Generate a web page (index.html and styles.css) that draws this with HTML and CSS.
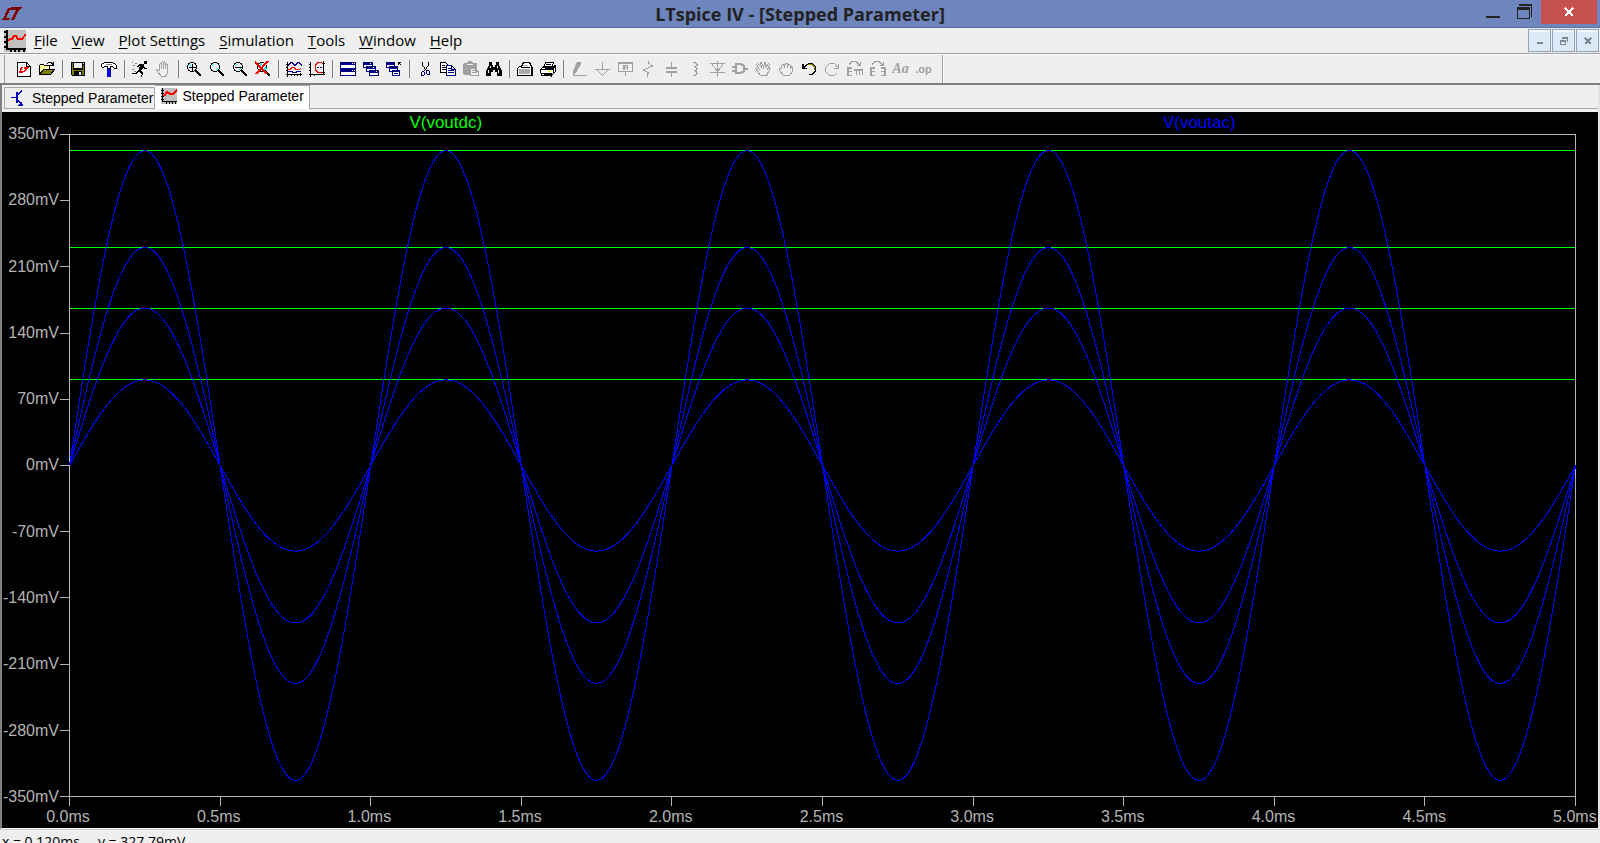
FILE: index.html
```html
<!DOCTYPE html>
<html lang="en">
<head>
    <meta charset="UTF-8">
    <meta name="viewport" content="width=device-width, initial-scale=1.0">
    <title>LTspice IV - [Stepped Parameter]</title>
    <link rel="stylesheet" href="styles.css">
</head>
<body>
<div class="app">
    <header class="titlebar">
        <svg class="app-logo" width="20" height="14" viewBox="0 0 20 14"><path fill="#800000" d="M6 1h3L4 11h4l-1 2H0v-1h1zM9 0h11l-1 2-2 1-5 10H9l5-10H8z"/></svg>
        <h1>LTspice IV - [Stepped Parameter]</h1>
        <div class="window-buttons">
            <button class="win-btn" aria-label="Minimize"><svg width="16" height="16"><path fill="#222" d="M1 12h14v2H1z"/></svg></button>
            <button class="win-btn" aria-label="Restore"><svg width="16" height="16"><path fill="#222" fill-rule="evenodd" d="M2 0h13v13h-1V2H2zM0 3h13v12H0zM1 6v8h11V6z"/></svg></button>
            <button class="win-btn close" aria-label="Close"><svg width="12" height="10"><path stroke="#fff" stroke-width="2" d="M2 1l8 8M10 1L2 9"/></svg></button>
        </div>
    </header>

    <nav class="menubar">
        <svg class="doc-icon" width="22" height="22" viewBox="0 0 22 22"><path fill="#c0c0c0" d="M0 0h22v22H0z"/><path stroke="#000" fill="none" stroke-width="2" d="M3 0v19M2 19h20M0 2h3M0 7h3M0 12h3M0 17h3M7 19v3M11 19v3M15 19v3M20 19v3"/><path stroke="#f00" stroke-width="2" fill="none" d="M4 11l2-2h2l2-3h2l2 3h4l4-5"/></svg>
        <a href="#"><u>F</u>ile</a>
        <a href="#"><u>V</u>iew</a>
        <a href="#"><u>P</u>lot Settings</a>
        <a href="#"><u>S</u>imulation</a>
        <a href="#"><u>T</u>ools</a>
        <a href="#"><u>W</u>indow</a>
        <a href="#"><u>H</u>elp</a>
        <div class="mdi-buttons">
            <button aria-label="Minimize plot"><svg width="8" height="8"><path fill="#7a8794" d="M1 5h6v2H1z"/></svg></button>
            <button aria-label="Restore plot"><svg width="8" height="8"><path fill="#7a8794" fill-rule="evenodd" d="M2 0h6v5H7V2H2zM0 3h6v5H0zM1 5v2h4V5z"/></svg></button>
            <button aria-label="Close plot"><svg width="8" height="8"><path stroke="#7a8794" stroke-width="2" d="M1 1l6 6M7 1L1 7"/></svg></button>
        </div>
    </nav>

    <div class="toolbar">
        <div class="tools">
        <button aria-label="New schematic"><svg viewBox="0 0 16 16"><path fill="#fff" stroke="#000" d="M1.500 1.500h9l4 4v10h-13zM10.500 1.500v4h4"/><path fill="#f00" d="M5 6h2L5 10h3l-1 2H3v-1zM8 6h5l-1 2h-1l-2 3H7l2-3H8z"/></svg></button>
        <button aria-label="Open"><svg viewBox="0 0 16 16"><path fill="#ff9" stroke="#000" d="M.5 13.500v-9l1-1h3l1 1h5v4"/><path fill="#808000" stroke="#000" d="M.5 13.500l4-5h11l-4 5z"/><path fill="none" stroke="#000" d="M8 2.500l2-1h2l2 2M14.500 1v3.500H11"/></svg></button>
        <i class="sep"></i>
        <button aria-label="Save"><svg viewBox="0 0 16 16"><path d="M1 1h14v14H2l-1-1z"/><path fill="#808000" d="M2 2h1v7h10V4h1v10h-2v-4H4v4H2z"/><path fill="#efefef" d="M4 2h8v5H4zM9 11h2v3H9zM13 2h1v1h-1z"/></svg></button>
        <i class="sep"></i>
        <button aria-label="Control panel"><svg viewBox="0 0 16 16"><path fill="#fff" stroke="#000" d="M.5 5.500v-2l3-2h7l3 1 2 2v3h-2l-2-2h-2v2h-3v-2h-3l-1 1h-1z"/><path fill="#808080" d="M5 3h6v1H5z"/><path stroke="#000" d="M6.500 6v3M9.500 6v3"/><path fill="#00f" d="M6 8h4v8H6z"/><path fill="#000080" d="M9 8h1v8H9z"/></svg></button>
        <i class="sep"></i>
        <button aria-label="Run"><svg viewBox="0 0 16 16"><path d="M12 0h3v3h-3zM8 3h3l1 1v2l2 1 1-1v2h-3l-1-1-2 3 2 2-1 4H9l1-3-3-2-3 2H0v-1h3l3-2 2-5-3 1V5z"/><path fill="#808080" d="M0 1h1v1H0zM3 2h2v1H3zM1 4h2v1H1zM0 8h2v1H0zM2 10h2v1H2z"/></svg></button>
        <button aria-label="Halt"><svg viewBox="0 0 16 16"><path class="gray-line" d="M4.500 10V3.500l1-1 1 1V8M6.500 8V1.500l1-1 1 1V8M8.500 2l1-1 1 1.500V8M10.500 4l1-1 1 1v8l-2 3.500h-4L5 13.500 1.500 9.500v-1h1l2 2"/></svg></button>
        <i class="sep"></i>
        <button aria-label="Zoom in"><svg viewBox="0 0 16 16"><circle cx="6" cy="6" r="4.500" fill="#efefef" stroke="#000"/><path stroke="#0ff" fill="none" d="M3.500 5L5 3.500"/><path stroke="#000" d="M3 6.500h7M6.500 3v7"/><path stroke="#000" stroke-width="2" d="M10 10l5 5"/></svg></button>
        <button aria-label="Pan"><svg viewBox="0 0 16 16"><circle cx="6" cy="6" r="4.500" fill="#efefef" stroke="#000"/><path stroke="#0ff" fill="none" d="M3 5l2-2M7 9l2-2"/><path stroke="#000" stroke-width="2" d="M10 10l5 5"/></svg></button>
        <button aria-label="Zoom out"><svg viewBox="0 0 16 16"><circle cx="6" cy="6" r="4.500" fill="#efefef" stroke="#000"/><path stroke="#0ff" fill="none" d="M3 5l2-2M7 9l2-2"/><path stroke="#000" d="M3 6.500h7"/><path stroke="#000" stroke-width="2" d="M10 10l5 5"/></svg></button>
        <button aria-label="Zoom full extents"><svg viewBox="0 0 16 16"><circle cx="7" cy="6" r="4.500" fill="#efefef" stroke="#000"/><path stroke="#0ff" stroke-width="2" d="M5 4l2-1M9 9l2-2"/><path stroke="#000" stroke-width="2" d="M10 10l5 5"/><path stroke="#f00" stroke-width="2" d="M0 1l12 12M13 0L1 13"/></svg></button>
        <i class="sep"></i>
        <button aria-label="Autorange"><svg viewBox="0 0 16 16"><path stroke="#000" d="M1.500 1v15M0 13.500h16M0 3.500h2M0 6.500h2M0 9.500h2M5.500 13v2M8.500 13v2M11.500 13v2M14.500 12v3"/><path fill="none" stroke="#000080" d="M2 4.500l3-3h1l3 3 3-3h1l3 3M2 10.500h4l1 1h3l1-1h4"/><path fill="none" stroke="#f00" d="M2 8.500h2l2-2h2l2 2h3l2-1"/></svg></button>
        <button aria-label="Plot settings"><svg viewBox="0 0 16 16"><path stroke="#000" d="M1.500 1v15M0 13.500h16M0 3.500h2M0 6.500h2M0 9.500h2M5.500 13v2M14.500 0v13M13 2.500h3M13 11.500h3"/><path fill="none" stroke="#f00" d="M13 1.500H9l-3 3v4l3 3h4"/><path fill="#000080" d="M8 6h2v1H8zM11 6h2v1h-2z"/></svg></button>
        <i class="sep"></i>
        <button aria-label="Tile windows"><svg viewBox="0 0 16 16"><path fill="#fff" stroke="#000080" d="M.5 1.500h15v6H.5zM.5 8.500h15v6H.5z"/><path fill="#000080" d="M0 1h16v3H0zM0 8h16v3H0z"/><path fill="#fff" d="M12 2h1v1h-1zM14 2h1v1h-1zM12 9h1v1h-1zM14 9h1v1h-1z"/></svg></button>
        <button aria-label="Cascade windows"><svg viewBox="0 0 16 16"><path fill="#fff" stroke="#000080" d="M.5 1.500h9v5h-9zM3.500 5.500h9v5h-9zM6.500 9.500h9v5h-9z"/><path fill="#000080" d="M0 1h10v3H0zM3 5h10v3H3zM6 9h10v3H6z"/><path fill="#fff" d="M7 2h1v1H7zM10 6h1v1h-1zM13 10h1v1h-1z"/></svg></button>
        <button aria-label="Close all windows"><svg viewBox="0 0 16 16"><path fill="#fff" stroke="#000080" d="M.5 1.500h8v5h-8zM3.500 5.500h8v5h-8zM6.500 9.500h7v5h-7z"/><path fill="#000080" d="M0 1h9v3H0zM3 5h9v3H3zM6 9h8v2H6zM8 12h4v1H8z"/><path stroke="#000" fill="none" d="M12.500 4V1.500H15M12.500 1.500l3 3"/></svg></button>
        <i class="sep"></i>
        <button aria-label="Cut"><svg viewBox="0 0 16 16"><path stroke="#000" fill="none" d="M5.500 1v3l4 6M11.500 1v3l-4 6"/><path stroke="#000080" fill="none" d="M4.500 10.500h2l1 1v2l-1 1h-2v-4M9.500 9.500h2l1 1v3h-2l-1-1z"/></svg></button>
        <button aria-label="Copy"><svg viewBox="0 0 16 16"><path fill="#fff" stroke="#000" d="M.5 1.500h5l3 3v7h-8z"/><path stroke="#000" d="M2 4.500h3M2 6.500h5M2 8.500h5"/><path fill="#fff" stroke="#000080" d="M6.500 4.500h5l4 4v6h-9zM11.500 4.500v4h4"/><path stroke="#000080" d="M8 7.500h3M8 9.500h6M8 11.500h6"/></svg></button>
        <button aria-label="Paste"><svg viewBox="0 0 16 16"><path fill="#a0a0a0" d="M0 3l1-1h3l1-2h4l1 2h3l1 1v11H1l-1-1z"/><path fill="#efefef" stroke="#a0a0a0" d="M7.500 7.500h5l3 3v4h-8zM12.500 7.500v3h3"/><path stroke="#a0a0a0" d="M9 9.500h3M9 11.500h5"/><path fill="#efefef" d="M4 3h6v1H4z"/></svg></button>
        <button aria-label="Find"><svg viewBox="0 0 16 16"><path d="M3 1h3v3h1v2h2V4h1V1h3v3l3 6v5h-5v-4H9V9H7v2H5v4H0v-5l3-6z"/><path fill="#fff" d="M4 5h1v2H4zM2 9h1v3H2zM11 5h1v2h-1zM12 9h1v3h-1z"/></svg></button>
        <i class="sep"></i>
        <button aria-label="Print"><svg viewBox="0 0 16 16"><path fill="#fff" stroke="#000" d="M.5 14.500v-7l2-2h2l2-4h6l2 4 1 2v7z"/><path fill="#aaa" d="M2 8h11v5H2zM6 4h5v1H6z"/><path d="M14 7h1v8H2v-1h12zM4 6h9v1H4z"/></svg></button>
        <button aria-label="Print setup"><svg viewBox="0 0 16 16"><path fill="#fff" stroke="#000" d="M3.500 6.500l2-5h8l-2 5zM.5 8.500l3-3h10l2-1v6l-4 4h-10z"/><path stroke="#000" d="M6 3.500h5M5 5.500h5M0 8.500h12l3-3M1 12.500h10v3M13 6v7"/><path fill="#ff0" d="M8 10h3v1H8z"/></svg></button>
        <i class="sep"></i>
        <button aria-label="Wire" disabled><svg viewBox="0 0 16 16"><path class="gray-fill" d="M6 1h4v2L5 12H4l-2 2v-4zM2 14h14v1H2z"/></svg></button>
        <button aria-label="Ground" disabled><svg viewBox="0 0 16 16"><path class="gray-line" d="M8.500 1v7M1 8.500h15M2.500 8.500l6 6 6-6"/></svg></button>
        <button aria-label="Label net" disabled><svg viewBox="0 0 16 16"><path class="gray-line" d="M1.500 1.500h14v9h-14zM1 2.500h15M8.500 11v4"/><path class="gray-line" d="M6.500 9V4.500h4V9M7.500 9V4M6 6.500h5"/></svg></button>
        <button aria-label="Resistor" disabled><svg viewBox="0 0 16 16"><path class="gray-line" d="M8.500 0v2l4 3-9 4 5 3-1 1v3"/></svg></button>
        <button aria-label="Capacitor" disabled><svg viewBox="0 0 16 16"><path class="gray-fill" d="M8 1h1v5h5v2H3V6h5zM3 10h11v2H9v4H8v-4H3z"/></svg></button>
        <button aria-label="Inductor" disabled><svg viewBox="0 0 16 16"><path class="gray-line" d="M7 1.500h2l2 2v1l-2 1H8l2 1 1 1-1 2H8l2 1 1 2-2 2H7"/></svg></button>
        <button aria-label="Diode" disabled><svg viewBox="0 0 16 16"><path class="gray-line" d="M8.500 0v16M1 2.500h15M3 3.500l5.500 7 5.500-7M1 11.500h15"/></svg></button>
        <button aria-label="Component" disabled><svg viewBox="0 0 16 16"><path class="gray-line" stroke-width="2" d="M4 3h5l3 2v5l-3 2H4zM0 5.500h4M0 9.500h4M12 7.500h4"/></svg></button>
        <button aria-label="Move" disabled><svg viewBox="0 0 16 16"><path class="gray-line" d="M5.500 14.500l-5-7 1-1 3 2-3-5 1-1 4 4-1-5h1l2 5 1-5h1v5l3-4 1 1-2 5 2-2 1 1-3 5-1 2z"/></svg></button>
        <button aria-label="Drag" disabled><svg viewBox="0 0 16 16"><path class="gray-line" d="M5.500 14.500l-4-5v-2h2v-3l1-1 2 1 1-2h2v2l2-1 1 1v1l2 1v4l-3 4zM6.500 4v3M9.500 4v3M12.500 5v3"/></svg></button>
        <button aria-label="Undo"><svg viewBox="0 0 16 16"><path fill="none" stroke="#000" d="M1.500 3v5M2 7.500h4M2.500 3v4M3 6.500l3-3 2-1h3l3 3v5l-3 3H8"/><path stroke="#808000" fill="none" d="M7 3.500h4l2 2v3"/></svg></button>
        <button aria-label="Redo" disabled><svg viewBox="0 0 16 16"><path class="gray-line" d="M14.500 3v4.500H10M13.500 6l-3-3.500h-5l-4 4v4l4 4h5l2-2"/></svg></button>
        <button aria-label="Rotate" disabled><svg viewBox="0 0 16 16"><path class="gray-line" d="M2 3.500l3-3h4l4 4M13.500 1v3.500H10"/><path class="gray-fill" d="M0 6h5v2H2v2h3v1H2v3h3v1H0zM7 8h9v6h-1v-4h-2v4h-1v-4h-2v4H9v-4H7z"/></svg></button>
        <button aria-label="Mirror" disabled><svg viewBox="0 0 16 16"><path class="gray-line" d="M2 3.500l3-3h4l4 4M13.500 1v3.500H10"/><path class="gray-fill" d="M0 6h5v2H2v2h3v1H2v3h3v1H0zM11 6h5v9h-5v-1h3v-3h-3v-1h3V8h-3z"/></svg></button>
        <button aria-label="Text" class="text-tool" disabled>Aa</button>
        <button aria-label="SPICE directive" class="op-tool" disabled>.op</button>
        </div>
    </div>

    <main class="workspace">
        <div class="tabs">
            <button class="tab"><svg width="16" height="18" viewBox="0 0 16 18"><path fill="none" stroke="#0000c0" d="M0 8.500h5M5.500 3v11M6.500 3v11M6 6.500l5-5M6 10.500l6 6"/><path fill="#0000c0" d="M11 12v5H7v-1l2-1z"/></svg>Stepped Parameter</button>
            <button class="tab active"><svg width="16" height="16" viewBox="0 0 16 16"><path fill="#c0c0c0" d="M0 0h16v16H0z"/><path stroke="#000" fill="none" d="M1.500 0v14M1 13.500h15M0 2.500h3M0 5.500h3M0 8.500h3M0 11.500h3M5.500 14v2M8.500 14v2M11.500 14v2M14.500 14v2"/><path stroke="#f00" stroke-width="2" fill="none" d="M3 8l3-4 3 2h3l4-4"/></svg>Stepped Parameter</button>
        </div>

        <section class="plot">
            <div class="legend">
                <span class="dc">V(voutdc)</span>
                <span class="ac">V(voutac)</span>
            </div>
            <div class="y-axis">
                <span>350mV</span><span>280mV</span><span>210mV</span><span>140mV</span><span>70mV</span><span>0mV</span><span>-70mV</span><span>-140mV</span><span>-210mV</span><span>-280mV</span><span>-350mV</span>
            </div>
            <div class="chart"><svg id="traces"></svg></div>
            <div class="x-axis">
                <span>0.0ms</span><span>0.5ms</span><span>1.0ms</span><span>1.5ms</span><span>2.0ms</span><span>2.5ms</span><span>3.0ms</span><span>3.5ms</span><span>4.0ms</span><span>4.5ms</span><span>5.0ms</span>
            </div>
        </section>
    </main>

    <footer class="statusbar"><span>x = 0.120ms</span><span>y = 327.79mV</span></footer>
</div>
<script src="plot.js"></script>
</body>
</html>
```
FILE: styles.css
```css
* {
    box-sizing: border-box;
}
body {
    margin: 0;
    background: #efefef;
    font-family: "Open Sans", "Noto Sans", sans-serif;
    color: #000;
}
button {
    border: 0;
    padding: 0;
    background: none;
    font: inherit;
    color: inherit;
}
svg {
    display: block;
    shape-rendering: crispEdges;
}
.app {
    display: flex;
    flex-direction: column;
    height: 100vh;
    overflow: hidden;
}

/* title bar */
.titlebar {
    display: grid;
    grid-template-columns: 1fr auto 1fr;
    flex: none;
    height: 28px;
    background: #6e85be;
    border-bottom: 1px solid #5a6ca0;
}
.app-logo {
    margin: 7px 0 0 2px;
}
.titlebar h1 {
    margin: 0;
    font-size: 18px;
    font-weight: 700;
    line-height: 28px;
    color: #222;
}
.window-buttons {
    display: flex;
    justify-content: flex-end;
    padding-right: 3px;
}
.win-btn {
    display: flex;
    align-items: center;
    justify-content: center;
    width: 32px;
    height: 24px;
}
.win-btn.close {
    width: 56px;
    background: #c75050;
}

/* menu */
.menubar {
    display: flex;
    align-items: center;
    flex: none;
    gap: 14px;
    height: 26px;
    padding-left: 4px;
    border-bottom: 1px solid #a0a0a0;
    font-size: 15px;
    line-height: 24px;
}
.menubar a {
    padding-bottom: 2px;
    color: #000;
    text-decoration: none;
}
.doc-icon {
    margin-right: -6px;
}
.menubar u {
    text-underline-offset: 2px;
}
.mdi-buttons {
    display: flex;
    gap: 1px;
    margin-left: auto;
    padding-right: 1px;
}
.mdi-buttons button {
    display: flex;
    align-items: center;
    justify-content: center;
    width: 23px;
    height: 23px;
    border: 1px solid #94a3b3;
    background: #dceaf8;
    box-shadow: inset 0 2px #f0f8ff;
}

/* toolbar */
.toolbar {
    flex: none;
    height: 31px;
    padding-left: 4px;
    border-top: 1px solid #fff;
    border-bottom: 2px solid #808080;
}
.tools {
    display: inline-flex;
    align-items: center;
    height: 28px;
    padding: 0 7px;
    border-left: 1px solid #a0a0a0;
    border-right: 1px solid #a0a0a0;
    box-shadow: 1px 0 #fff;
}
.tools button {
    display: flex;
    align-items: center;
    justify-content: center;
    width: 23px;
    height: 24px;
}
.tools svg {
    width: 16px;
    height: 16px;
}
.sep {
    width: 8px;
    height: 18px;
    background: linear-gradient(#808080, #808080) center / 1px 100% no-repeat;
}
.gray-line {
    fill: none;
    stroke: #a0a0a0;
}
.gray-fill {
    fill: #a0a0a0;
}
.tools .text-tool {
    font: italic bold 14px "Liberation Serif", serif;
    color: #a0a0a0;
}
.tools .op-tool {
    font: bold 11px "Liberation Sans", sans-serif;
    color: #a0a0a0;
}

/* tabs */
.workspace {
    display: flex;
    flex-direction: column;
    flex: 1;
    min-height: 0;
    border-left: 2px solid #808080;
    border-right: 2px solid #e3e3e3;
    border-bottom: 1px solid #fff;
}
.tabs {
    display: flex;
    align-items: flex-end;
    flex: none;
    height: 27px;
    padding: 0 2px 3px;
    background: linear-gradient(#a8a8a8, #a8a8a8) 2px 23px / 100% 1px no-repeat;
    font-family: "Liberation Sans", Arial, sans-serif;
    font-size: 14px;
}
.tab {
    display: flex;
    align-items: center;
    gap: 5px;
    height: 22px;
    padding: 0 1px 0 6px;
    border: 1px solid #a8a8a8;
    background: #efefef;
}
.tab.active {
    height: 24px;
    padding: 0 5px 3px 6px;
    border-bottom: 0;
    border-left: 0;
    background: #fff;
}

/* waveform window */
.plot {
    display: grid;
    grid-template-columns: 67px 1fr;
    grid-template-rows: 22px 1fr 31px;
    flex: 1;
    min-height: 0;
    padding-right: 22px;
    background: #000;
    color: #b4b4b4;
    font-family: "Liberation Sans", Arial, sans-serif;
    font-size: 16px;
    line-height: 18px;
}
.legend {
    grid-column: 2;
    display: grid;
    grid-template-columns: 1fr 1fr;
    font-size: 17px;
    line-height: 22px;
    text-align: center;
}
.dc {
    color: #0f0;
}
.ac {
    color: #00f;
}
.y-axis {
    display: flex;
    flex-direction: column;
    justify-content: space-between;
    margin: -9px 0;
    padding-right: 10px;
    text-align: right;
}
.chart {
    min-width: 0;
    min-height: 0;
    overflow: visible;
}
#traces {
    width: 100%;
    height: 100%;
    overflow: visible;
}
.x-axis {
    grid-column: 2;
    display: flex;
    justify-content: space-between;
    margin: 0 -24px 0 -26px;
    padding-top: 11px;
}
.x-axis span {
    width: 50px;
    text-align: center;
}

/* status */
.statusbar {
    display: flex;
    flex: none;
    gap: 18px;
    height: 14px;
    padding: 0 2px;
    border-top: 1px solid #d0d0d0;
    overflow: hidden;
    font-size: 14px;
    line-height: 24px;
}
```
FILE: plot.js
```js
var svg = document.getElementById('traces');
var levels = [333, 230.5, 166.5, 90.5]; // mV, one per step
var range = 350;
var periods = 5;

function addPath(d, color) {
    var path = document.createElementNS('http://www.w3.org/2000/svg', 'path');
    path.setAttribute('d', d);
    path.setAttribute('stroke', color);
    path.setAttribute('fill', 'none');
    svg.appendChild(path);
}

function draw() {
    var w = svg.clientWidth;
    var h = svg.clientHeight;
    svg.innerHTML = '';

    // frame and ticks
    var axes = 'M.5 .5H' + (w - 0.5) + 'V' + (h - 0.5) + 'H.5Z';
    for (var i = 0; i <= 10; i++) {
        var x = Math.round(i * (w - 1) / 10) + 0.5;
        var y = Math.round(i * (h - 1) / 10) + 0.5;
        axes += 'M-9 ' + y + 'H0M' + x + ' ' + h + 'v9';
    }
    addPath(axes, '#b4b4b4');

    levels.forEach(function (mv) {
        var y = Math.round((h - 1) / 2 * (1 - mv / range)) + 0.5;
        addPath('M1 ' + y + 'H' + (w - 1), '#0f0');
    });

    levels.forEach(function (mv) {
        var points = [];
        for (var x = 0; x < w; x += 3) {
            var v = mv * Math.sin(2 * Math.PI * periods * x / (w - 1));
            points.push((x + 0.5) + ' ' + ((h - 1) / 2 * (1 - v / range) + 0.5));
        }
        addPath('M' + points.join('L'), '#00f');
    });
}

draw();
window.addEventListener('resize', draw);
```
